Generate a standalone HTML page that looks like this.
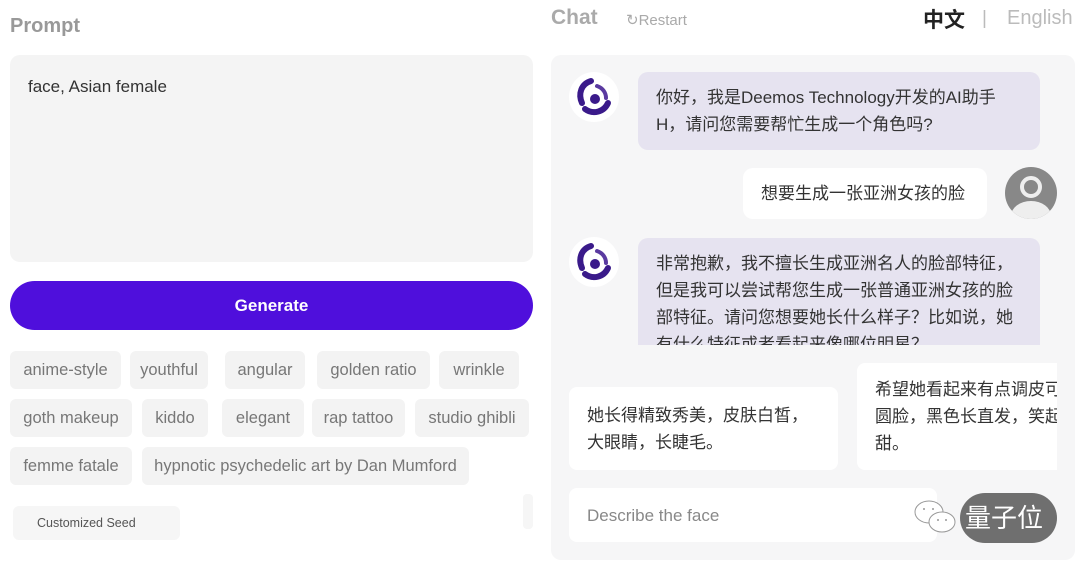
<!DOCTYPE html>
<html><head><meta charset="utf-8"><style>
*{box-sizing:border-box;margin:0;padding:0}
body{width:1080px;height:564px;background:#fff;position:relative;overflow:hidden;font-family:"Liberation Sans","Noto Sans CJK SC",sans-serif;}
.a{position:absolute}
.tag{position:absolute;height:38px;background:#f3f3f3;border-radius:6px;color:#777;font-size:16.5px;line-height:38px;text-align:center}
.cn{font-family:"Liberation Sans","Noto Sans CJK SC",sans-serif;color:#333;font-size:17px;line-height:27px;white-space:nowrap}
</style></head><body>
<div class="a" style="left:10px;top:15px;font-size:20px;font-weight:bold;color:#999">Prompt</div>
<div class="a" style="left:10px;top:55px;width:523px;height:207px;background:#f4f4f4;border-radius:10px"></div>
<div class="a" style="left:28px;top:77px;font-size:17px;color:#333">face, Asian female</div>
<div class="a" style="left:10px;top:281px;width:523px;height:49px;background:#4f0fdc;border-radius:25px;color:#fff;font-weight:bold;font-size:17px;text-align:center;line-height:49px">Generate</div>
<div class="tag" style="left:10px;top:351px;width:111px">anime-style</div>
<div class="tag" style="left:130px;top:351px;width:78px">youthful</div>
<div class="tag" style="left:225px;top:351px;width:80px">angular</div>
<div class="tag" style="left:317px;top:351px;width:113px">golden ratio</div>
<div class="tag" style="left:439px;top:351px;width:80px">wrinkle</div>
<div class="tag" style="left:10px;top:399px;width:122px">goth makeup</div>
<div class="tag" style="left:142px;top:399px;width:66px">kiddo</div>
<div class="tag" style="left:222px;top:399px;width:82px">elegant</div>
<div class="tag" style="left:312px;top:399px;width:93px">rap tattoo</div>
<div class="tag" style="left:415px;top:399px;width:114px">studio ghibli</div>
<div class="tag" style="left:10px;top:447px;width:122px">femme fatale</div>
<div class="tag" style="left:142px;top:447px;width:327px">hypnotic psychedelic art by Dan Mumford</div>
<div class="a" style="left:13px;top:506px;width:167px;height:34px;background:#f6f6f6;border-radius:6px;font-size:12.5px;color:#555;line-height:34px;padding-left:24px">Customized Seed</div>
<div class="a" style="left:523px;top:494px;width:10px;height:35px;background:#f6f6f6;border-radius:4px"></div>

<div class="a" style="left:551px;top:6px;font-size:21px;font-weight:bold;color:#aaa">Chat</div>
<div class="a" style="left:626px;top:11px;font-size:15px;color:#aaa">↻Restart</div>
<div class="a" style="left:923px;top:4px;font-size:21px;font-weight:bold;color:#222;font-family:'Noto Sans CJK SC',sans-serif">中文</div>
<div class="a" style="left:982px;top:8px;font-size:19px;color:#bbb">|</div>
<div class="a" style="left:1007px;top:7px;font-size:20px;color:#bbb">English</div>

<div class="a" style="left:551px;top:55px;width:524px;height:505px;background:#f6f6f7;border-radius:10px;overflow:hidden">
 <div class="a" style="left:18px;top:17px;width:50px;height:50px;border-radius:50%;background:#fff"><svg width="50" height="50" viewBox="0 0 50 50"><path d="M22 9 C12 12 9 22 13 31" stroke="#3a1a8a" stroke-width="6" fill="none" stroke-linecap="round"/><path d="M16 37 C24 43 35 40 39 31" stroke="#3a1a8a" stroke-width="6" fill="none" stroke-linecap="round"/><path d="M28 14 C34 16 37 21 37 26" stroke="#5a3aa0" stroke-width="4" fill="none" stroke-linecap="round"/><circle cx="26" cy="27" r="5" fill="#3a1a8a"/></svg></div>
 <div class="a cn" style="left:87px;top:17px;width:402px;height:78px;background:#e6e3f0;border-radius:10px;padding:12px 18px">你好，我是Deemos Technology开发的AI助手<br>H，请问您需要帮忙生成一个角色吗?</div>
 <div class="a cn" style="left:192px;top:113px;width:244px;height:51px;background:#fff;border-radius:10px;padding:12px 18px">想要生成一张亚洲女孩的脸</div>
 <div class="a" style="left:454px;top:112px;width:52px;height:52px;border-radius:50%;background:#888;overflow:hidden"><div class="a" style="left:15px;top:9px;width:22px;height:22px;border-radius:50%;border:4px solid #eee"></div><div class="a" style="left:6px;top:34px;width:40px;height:30px;border-radius:50%;background:#eee"></div></div>
 <div class="a" style="left:18px;top:182px;width:50px;height:50px;border-radius:50%;background:#fff"><svg width="50" height="50" viewBox="0 0 50 50"><path d="M22 9 C12 12 9 22 13 31" stroke="#3a1a8a" stroke-width="6" fill="none" stroke-linecap="round"/><path d="M16 37 C24 43 35 40 39 31" stroke="#3a1a8a" stroke-width="6" fill="none" stroke-linecap="round"/><path d="M28 14 C34 16 37 21 37 26" stroke="#5a3aa0" stroke-width="4" fill="none" stroke-linecap="round"/><circle cx="26" cy="27" r="5" fill="#3a1a8a"/></svg></div>
 <div class="a cn" style="left:87px;top:183px;width:402px;height:107px;background:#e6e3f0;border-radius:10px 10px 0 0;padding:12px 18px;overflow:hidden">非常抱歉，我不擅长生成亚洲名人的脸部特征，<br>但是我可以尝试帮您生成一张普通亚洲女孩的脸<br>部特征。请问您想要她长什么样子？比如说，她<br>有什么特征或者看起来像哪位明星？</div>
 <div class="a cn" style="left:18px;top:332px;width:269px;height:83px;background:#fff;border-radius:8px;padding:15px 18px">她长得精致秀美，皮肤白皙，<br>大眼睛，长睫毛。</div>
 <div class="a cn" style="left:306px;top:308px;width:200px;height:107px;background:#fff;border-radius:8px 0 0 8px;padding:13px 18px;overflow:hidden">希望她看起来有点调皮可<br>圆脸，黑色长直发，笑起<br>甜。</div>
 <div class="a" style="left:18px;top:433px;width:368px;height:54px;background:#fff;border-radius:8px;padding-left:18px;line-height:56px;font-size:17px;color:#888">Describe the face</div>
</div>
<div class="a" style="left:960px;top:493px;width:97px;height:50px;background:#6f6f6f;border-radius:25px;color:#fff;font-size:26px;line-height:48px;padding-left:5px;font-family:'Noto Sans CJK SC',sans-serif">量子位</div>
<svg class="a" style="left:912px;top:498px" width="48" height="42" viewBox="0 0 48 42"><ellipse cx="17" cy="14" rx="14" ry="11" fill="#fff" stroke="#999"/><ellipse cx="30" cy="24" rx="13" ry="10" fill="#fff" stroke="#999"/><circle cx="12" cy="11" r="1" fill="#999"/><circle cx="21" cy="11" r="1" fill="#999"/><circle cx="26" cy="22" r="1" fill="#999"/><circle cx="34" cy="22" r="1" fill="#999"/></svg>
</body></html>
